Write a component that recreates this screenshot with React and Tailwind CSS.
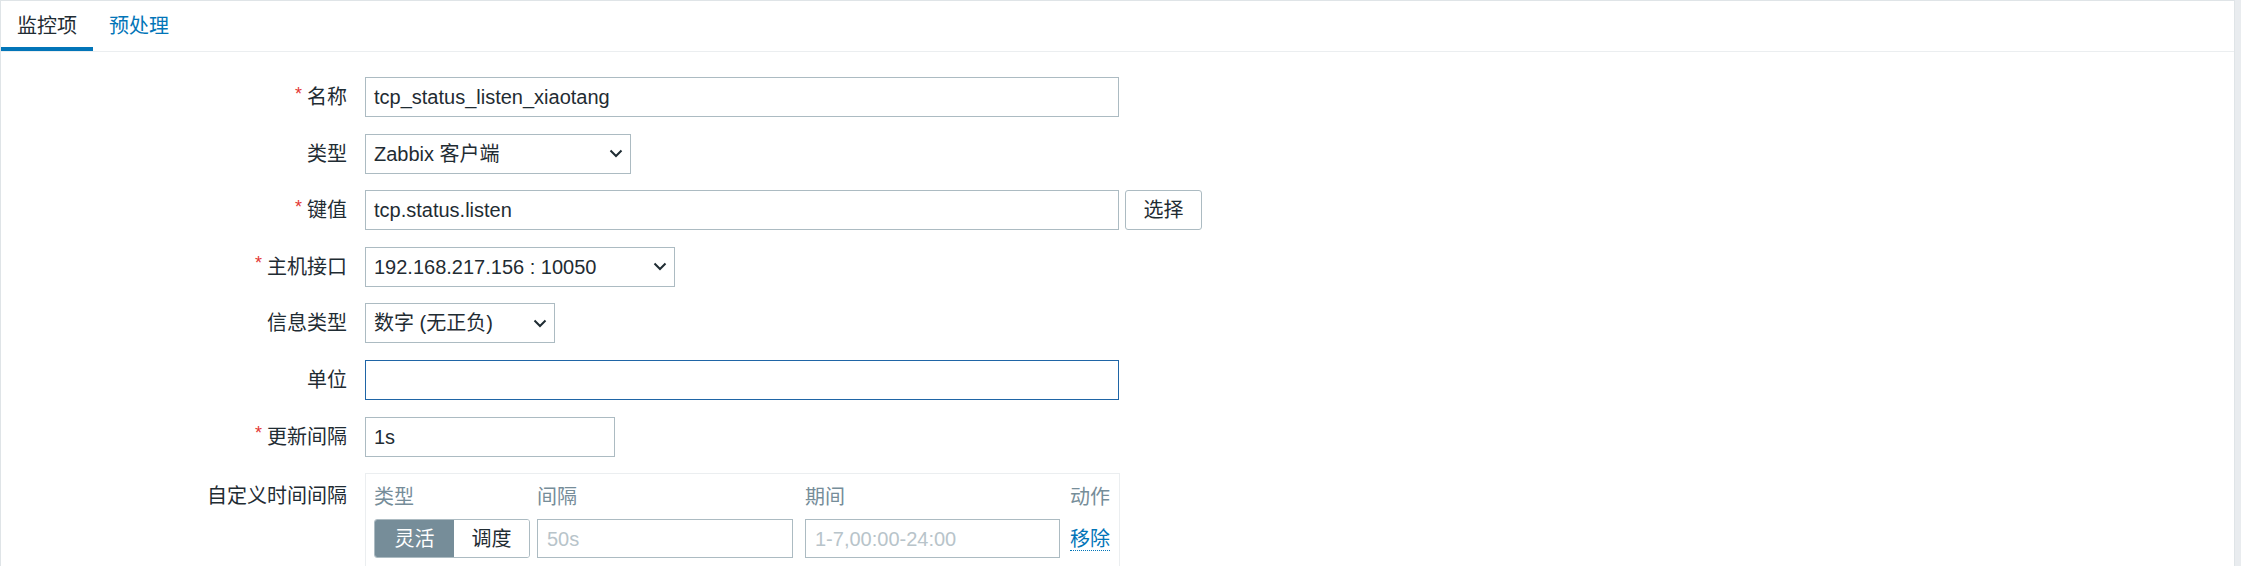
const FONT = { fontFamily: '"Liberation Sans", "Noto Sans CJK SC", sans-serif' };

function Chevron() {
  return (
    <svg width="14" height="9" viewBox="0 0 14 9" className="shrink-0">
      <polyline points="1.5,1.5 7,7 12.5,1.5" fill="none" stroke="#1f2c33" strokeWidth="2" />
    </svg>
  );
}

function Label({ required, children, top }) {
  return (
    <div
      className={`flex justify-end text-[20px] text-[#1f2c33] ${
        top ? "items-start pt-[11px] leading-[24px]" : "h-10 items-center"
      }`}
    >
      {required && <span className="mr-[5px] -mt-[6px] text-[18px] text-[#e33734]">*</span>}
      <span>{children}</span>
    </div>
  );
}

function TextBox({ value, width, focused }) {
  return (
    <div
      className={`flex h-10 items-center border bg-white px-[8px] text-[20px] text-[#1f2c33] ${
        focused ? "border-[#1f65a6]" : "border-[#acbbc2]"
      } ${width}`}
    >
      {value}
    </div>
  );
}

function Select({ value, width }) {
  return (
    <div
      className={`flex h-10 items-center justify-between border border-[#acbbc2] bg-white pl-[8px] pr-[7px] text-[20px] text-[#1f2c33] ${width}`}
    >
      <span>{value}</span>
      <Chevron />
    </div>
  );
}

export default function App() {
  return (
    <div className="flex h-[566px] w-full overflow-hidden bg-[#e9ecef]" style={FONT}>
      <div className="mr-[6px] flex-1 border border-b-0 border-[#dfe4e7] bg-white">
        <div className="flex border-b border-[#ebeef0]">
          <div className="h-[50px] border-b-4 border-[#0275b8] px-[16px] pt-[13px] text-[20px] leading-[24px] text-[#1f2c33]">
            监控项
          </div>
          <div className="h-[50px] px-[16px] pt-[13px] text-[20px] leading-[24px] text-[#0275b8]">
            预处理
          </div>
        </div>

        <div className="grid grid-cols-[346px_1fr] gap-x-[18px] gap-y-[16.6px] pt-[25px]">
          <Label required>名称</Label>
          <TextBox value="tcp_status_listen_xiaotang" width="w-[754px]" />

          <Label>类型</Label>
          <Select value="Zabbix 客户端" width="w-[266px]" />

          <Label required>键值</Label>
          <div className="flex items-center gap-[6px]">
            <TextBox value="tcp.status.listen" width="w-[754px]" />
            <button className="h-10 w-[77px] rounded-[3px] border border-[#acbbc2] bg-white text-[20px] text-[#1f2c33]">
              选择
            </button>
          </div>

          <Label required>主机接口</Label>
          <Select value="192.168.217.156 : 10050" width="w-[310px]" />

          <Label>信息类型</Label>
          <Select value="数字 (无正负)" width="w-[190px]" />

          <Label>单位</Label>
          <TextBox value="" width="w-[754px]" focused />

          <Label required>更新间隔</Label>
          <TextBox value="1s" width="w-[250px]" />

          <Label top>自定义时间间隔</Label>
          <div className="w-[755px] border border-[#ebeef0] px-[8px] pb-[20px] pt-[11px]">
            <div className="flex text-[20px] leading-[24px] text-[#768d99]">
              <div className="w-[156px]">类型</div>
              <div className="ml-[7px] w-[256px]">间隔</div>
              <div className="ml-[12px] w-[255px]">期间</div>
              <div className="ml-[10px] w-[40px] text-right">动作</div>
            </div>
            <div className="mt-[10px] flex items-center">
              <div className="flex h-[39px] w-[156px] overflow-hidden rounded-[3px] border border-[#acbbc2] text-[20px]">
                <div className="flex w-[79px] items-center justify-center bg-[#768d99] text-white">灵活</div>
                <div className="flex flex-1 items-center justify-center bg-white text-[#1f2c33]">调度</div>
              </div>
              <div className="ml-[7px] flex h-[39px] w-[256px] items-center border border-[#acbbc2] px-[9px] text-[20px] text-[#b8c4ca]">
                50s
              </div>
              <div className="ml-[12px] flex h-[39px] w-[255px] items-center border border-[#acbbc2] px-[9px] text-[20px] text-[#b8c4ca]">
                1-7,00:00-24:00
              </div>
              <div className="ml-[10px] w-[40px] text-right text-[20px] leading-[24px] text-[#0275b8]">
                <span className="border-b border-dotted border-[#0275b8]">移除</span>
              </div>
            </div>
          </div>
        </div>
      </div>
    </div>
  );
}
